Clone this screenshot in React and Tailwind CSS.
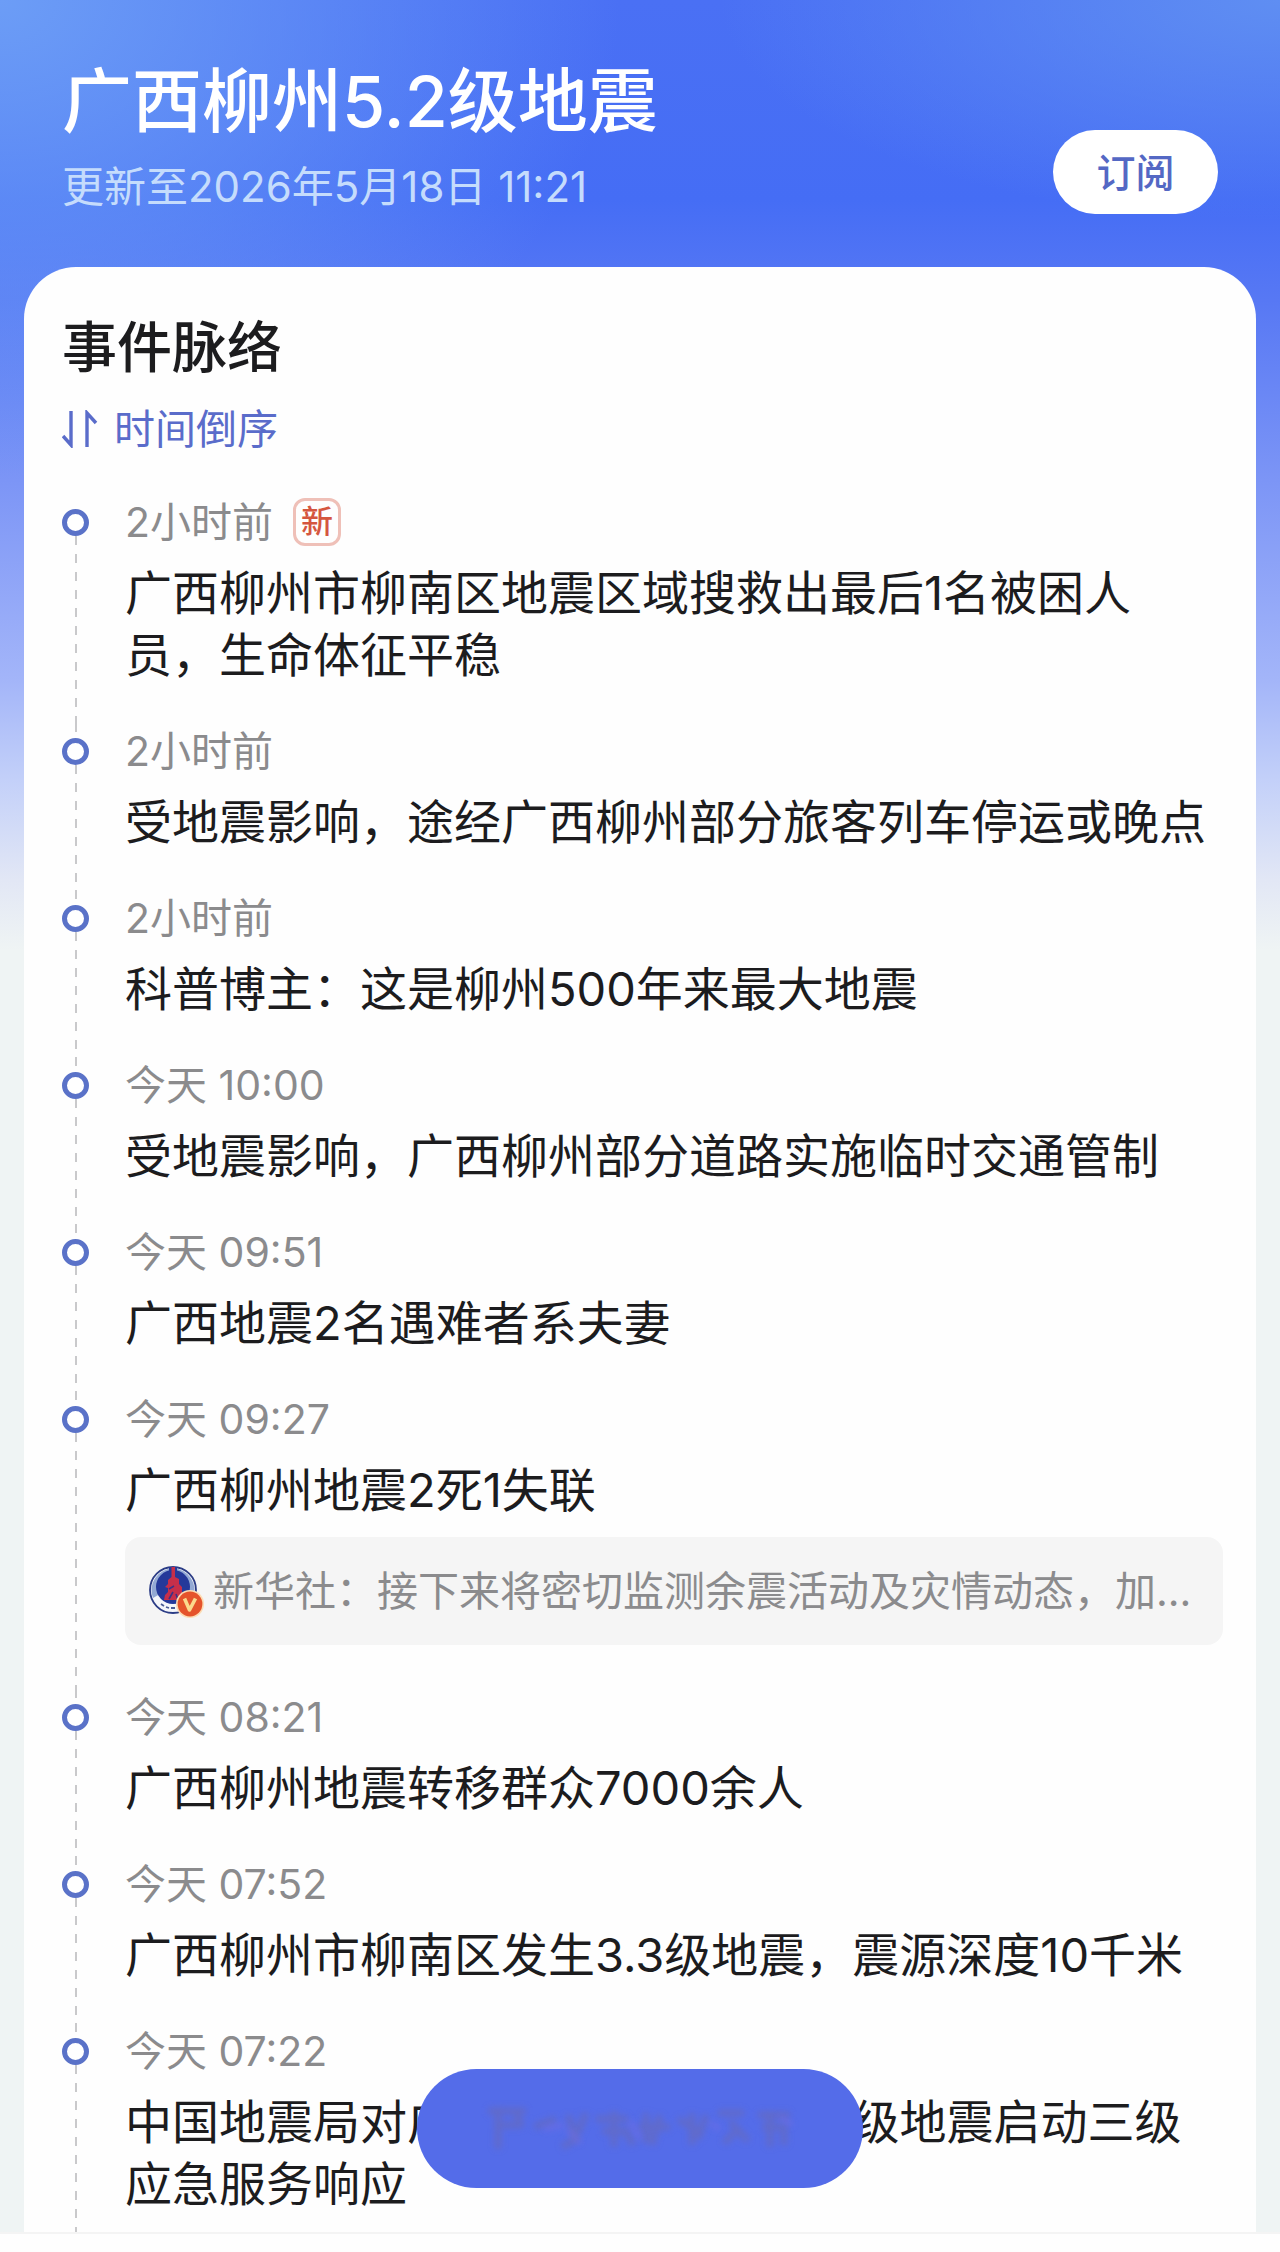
import React, { useState } from 'react';
import clsx from 'clsx';

const EVENTS = [
  { time: '2小时前', isNew: true, text: '广西柳州市柳南区地震区域搜救出最后1名被困人员，生命体征平稳' },
  { time: '2小时前', text: '受地震影响，途经广西柳州部分旅客列车停运或晚点' },
  { time: '2小时前', text: '科普博主：这是柳州500年来最大地震' },
  { time: '今天 10:00', text: '受地震影响，广西柳州部分道路实施临时交通管制' },
  { time: '今天 09:51', text: '广西地震2名遇难者系夫妻' },
  {
    time: '今天 09:27',
    text: '广西柳州地震2死1失联',
    source: '新华社：接下来将密切监测余震活动及灾情动态，加...'
  },
  { time: '今天 08:21', text: '广西柳州地震转移群众7000余人' },
  { time: '今天 07:52', text: '广西柳州市柳南区发生3.3级地震，震源深度10千米' },
  { time: '今天 07:22', text: '中国地震局对广西柳州市柳南区5.2级地震启动三级应急服务响应' }
];

const DASHES =
  'bg-[repeating-linear-gradient(to_bottom,#c9c9cb_0px,#c9c9cb_9px,transparent_9px,transparent_18px)]';

const SortIcon = () => (
  <svg viewBox="0 0 36 38" className="h-[38px] w-9" fill="none" stroke="currentColor" strokeWidth="3.4">
    <path d="M1 26 L9 35 V1" />
    <path d="M25 37 V3 L34 13" />
  </svg>
);

const SourceAvatar = () => (
  <svg viewBox="0 0 56 54" className="h-[54px] w-14 shrink-0">
    <circle cx="24" cy="26" r="23" fill="#f4f6fa" stroke="#2c3d86" strokeWidth="1.8" />
    <path d="M4 34 A21.5 21.5 0 1 1 44 34 L37 30 A14 14 0 0 1 11 30 Z" fill="#93a9d4" />
    <circle cx="24" cy="23" r="17" fill="#25399a" />
    <path d="M20 3 h8 v7 h-8 Z" fill="#25399a" />
    <path d="M22.5 3 h3.5 v10 l4 2 v5 l3 3 v6 l3 4 v3 H15 l1 -5 3 -3 v-4 l-3 -1 3 -3 v-4 l3.5 -3 Z" fill="#c62f4a" />
    <path d="M20 25 l5 -3 M20 35 l4 -7 M27 30 l2 6" stroke="#3a3288" strokeWidth="1.6" />
    <path d="M12 40 l3 2 M17 43 l3 1 M22 44 h4" stroke="#4a5c94" strokeWidth="1.8" />
    <circle cx="41" cy="40" r="14" fill="#fcdcb4" />
    <circle cx="41" cy="40" r="12.4" fill="#e5532b" />
    <path d="M35.5 34.5 L40.5 46 L46.5 34.5" fill="none" stroke="#fbd98c" strokeWidth="3.6" strokeLinejoin="round" />
  </svg>
);

// Faint smudge inside the floating button
const Smudge = () => (
  <svg viewBox="0 0 320 60" className="h-[60px] w-[320px]" fill="none">
    <defs>
      <filter id="soft" x="-10%" y="-30%" width="120%" height="160%">
        <feGaussianBlur stdDeviation="3" />
      </filter>
    </defs>
    <g filter="url(#soft)" stroke="#646bc4" strokeWidth="7" opacity="0.8">
      <path d="M8 12 H46 M14 26 H42 M18 8 V50 M36 14 L42 28" />
      <path d="M54 28 L76 20 M88 16 L96 40 L82 48 M106 14 L98 34" />
      <path d="M116 20 H148 M122 32 H150 M134 12 V48 M146 34 L154 46" />
      <path d="M166 14 V44 M158 28 H190 M180 16 L172 46" />
      <path d="M198 20 L218 32 M212 14 V46 M226 16 L218 40" />
      <path d="M238 14 H264 M250 22 L268 42 M244 44 L260 28" />
      <path d="M278 16 H310 M282 28 H308 M290 12 V48 M304 26 V46" />
    </g>
    <g filter="url(#soft)" stroke="#7a6ee2" strokeWidth="4" opacity="0.6">
      <path d="M64 30 L84 26 M88 30 L100 44 M150 22 L160 40 M230 24 L240 30 M300 18 L312 26" />
    </g>
  </svg>
);

const TimelineItem = ({ event, isFirst, isLast }) => (
  <li className="flex gap-9">
    <div className="flex w-[27px] shrink-0 flex-col items-center">
      <span className={clsx('h-[15px] w-[2px]', !isFirst && DASHES)} />
      <span className="h-[27px] w-[27px] rounded-full border-[5px] border-[#5a72c8] bg-white" />
      <span className={clsx('w-[2px] flex-1', DASHES)} />
    </div>
    <div className={clsx('min-w-0 flex-1', isLast ? 'pb-[17px]' : 'pb-[37px]')}>
      <div className="flex h-14 items-center gap-5 text-[41px] leading-[56px] text-[#8b8b8d]">
        <time>{event.time}</time>
        {event.isNew && (
          <span className="flex h-12 w-12 items-center justify-center rounded-xl border-3 border-[#efc0b8] text-[32px] leading-none font-medium text-[#d5563f]">
            新
          </span>
        )}
      </div>
      <p className="mt-3 text-[47px] leading-[62px] text-[#1c1c1e]">{event.text}</p>
      {event.source && (
        <a href="#source" className="mt-4 mb-[7px] flex min-h-[108px] items-center gap-2 rounded-2xl bg-[#f5f5f5] px-6">
          <SourceAvatar />
          <span className="min-w-0 flex-1 text-[41px] leading-[60px] text-[#8b8b8d]">{event.source}</span>
        </a>
      )}
    </div>
  </li>
);

const App = () => {
  const [subscribed, setSubscribed] = useState(false);
  const [reversed, setReversed] = useState(true);
  const events = reversed ? EVENTS : [...EVENTS].reverse();

  return (
    <div className="flex min-h-screen flex-col bg-[#fefefe] font-[Inter,'Noto_Sans_CJK_SC',sans-serif]">
      <div className="bg-[radial-gradient(620px_480px_at_0px_0px,#6c9df6_0%,transparent_100%),radial-gradient(560px_220px_at_100%_0px,#5f8ef2_0%,transparent_100%),linear-gradient(to_bottom,#4a70f4_0px,#456df5_200px,#5778f4_300px,#7c95f6_480px,#a3b5f9_680px,#c3d0f9_780px,#e2e7f5_880px,#eff4f4_950px)]">
        <header className="flex items-end justify-between pt-[60px] pr-[62px] pb-[53px] pl-[62px]">
          <div>
            <h1 className="text-[70px] leading-[84px] font-medium text-white">广西柳州5.2级地震</h1>
            <p className="mt-4 text-[42px] leading-[54px] text-[#c5dcfc]">更新至2026年5月18日 11:21</p>
          </div>
          <button
            type="button"
            onClick={() => setSubscribed(!subscribed)}
            className="h-[84px] w-[165px] rounded-full bg-white text-[39px] leading-none font-medium text-[#5468c4]"
          >
            {subscribed ? '已订' : '订阅'}
          </button>
        </header>

        <main className="mx-6 rounded-t-[52px] bg-[#fefefe] pt-[42px] pr-[33px] pl-[38px]">
          <h2 className="text-[55px] leading-[76px] font-medium text-[#1c1c1e]">事件脉络</h2>
          <button
            type="button"
            onClick={() => setReversed(!reversed)}
            className="mt-4 flex items-center gap-4 text-[41px] leading-[56px] text-[#5a6cca]"
          >
            <SortIcon />
            {reversed ? '时间倒序' : '时间正序'}
          </button>
          <ol className="mt-[37px]">
            {events.map((event, i) => (
              <TimelineItem key={event.text} event={event} isFirst={i === 0} isLast={i === events.length - 1} />
            ))}
          </ol>
        </main>
      </div>
      <div className="flex-1 border-t-2 border-[#f4f4f4]" />

      <button
        type="button"
        aria-label="查看更多"
        className="fixed bottom-16 left-1/2 flex h-[119px] w-[446px] -translate-x-1/2 items-center justify-center rounded-full bg-[#546ce9]"
      >
        <Smudge />
      </button>
    </div>
  );
};

export default App;
